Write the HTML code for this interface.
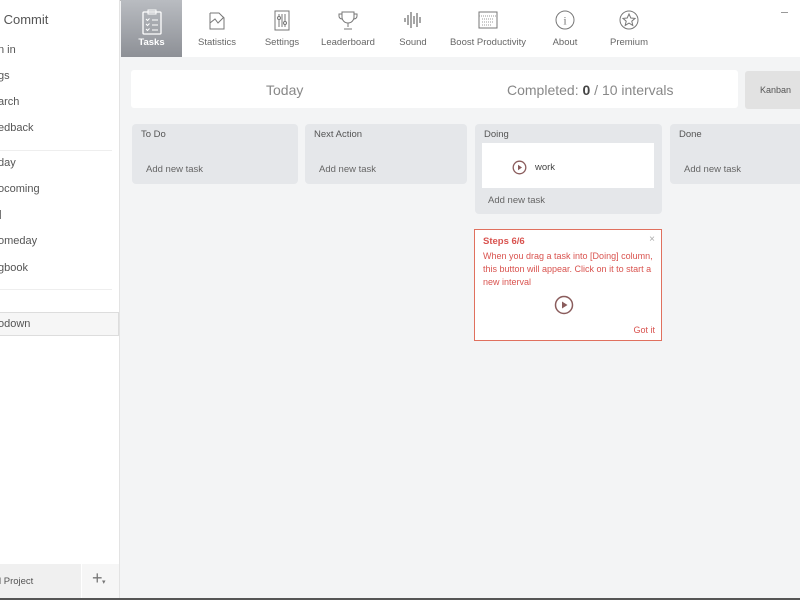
<!DOCTYPE html>
<html><head><meta charset="utf-8"><style>
*{margin:0;padding:0;box-sizing:border-box}
body{width:800px;height:600px;overflow:hidden;background:#f3f4f5;font-family:"Liberation Sans",sans-serif;position:relative;color:#555}
.a{position:absolute}
#side{left:0;top:0;width:120px;height:600px;background:#fff;border-right:1px solid #e3e3e3}
.si{position:absolute;left:-2px;font-size:11px;color:#555}
.nav{left:121px;top:0;width:679px;height:57px;background:#fff}
.tab{position:absolute;top:0;height:57px;text-align:center;font-size:9.5px;color:#666}
.tab span{position:absolute;left:0;right:0;top:37px}
.tab svg{position:absolute;top:9px;left:50%;margin-left:-11px}
.col{position:absolute;background:#e5e7ea;border-radius:4px;font-size:9.5px;color:#555}
.col .t{position:absolute;left:9px;top:5px}
.col .n{position:absolute;left:14px;top:40px;color:#666}
</style></head><body>
<div class="a" style="left:0;top:0;width:800px;height:1px;background:#bbb"></div>
<div id="side" class="a">
<div class="si" style="top:12px;font-size:13px;left:0">&nbsp;Commit</div>
<div class="si" style="top:44px">n in</div>
<div class="si" style="top:70px">gs</div>
<div class="si" style="top:96px">arch</div>
<div class="si" style="top:122px">edback</div>
<div class="a" style="left:0;top:150px;width:112px;height:1px;background:#eee"></div>
<div class="si" style="top:157px">day</div>
<div class="si" style="top:183px">ocoming</div>
<div class="a" style="left:0;top:210px;width:1px;height:9px;background:#777"></div>
<div class="si" style="top:235px">omeday</div>
<div class="si" style="top:262px">gbook</div>
<div class="a" style="left:0;top:289px;width:112px;height:1px;background:#eee"></div>
<div class="a" style="left:0;top:312px;width:119px;height:24px;background:#f6f6f6;border:1px solid #ddd;border-left:none"></div>
<div class="si" style="top:318px">odown</div>
<div class="a" style="left:0;top:564px;width:81px;height:34px;background:#f0f0f0"></div>
<div class="a" style="left:82px;top:564px;width:37px;height:34px;background:#f6f6f6"></div>
<div class="si" style="top:576px;font-size:9.5px;left:-1px">l Project</div>
<div class="a" style="left:92px;top:568px;font-size:18px;color:#777;font-weight:200">+</div>
<div class="a" style="left:102px;top:578px;font-size:7px;color:#777">▾</div>
</div>
<div class="a" style="left:0;top:598px;width:800px;height:2px;background:#555"></div>
<div class="a nav">
<div class="tab" style="left:0;width:61px;background:linear-gradient(#b9bcc1,#8d9096);color:#fff;font-weight:bold"><svg width="22" height="26" viewBox="0 0 22 26"><rect x="2" y="3" width="18" height="22" rx="1" fill="none" stroke="#fff" stroke-width="1.3"/><rect x="7" y="1" width="8" height="4" fill="none" stroke="#fff"/><path d="M5 10l1.5 1.5 2-2M11 11h6M5 15l1.5 1.5 2-2M11 16h6M5 20l1.5 1.5 2-2M11 21h6" stroke="#fff" fill="none"/></svg><span>Tasks</span></div>
<div class="tab" style="left:70px;width:52px"><svg width="22" height="22" viewBox="0 0 22 22"><path d="M4 4v16h14V9l-5-5H4M4 14l5-4 3 4 6-6" fill="none" stroke="#777"/></svg><span>Statistics</span></div>
<div class="tab" style="left:135px;width:52px"><svg width="22" height="22" viewBox="0 0 22 22"><rect x="4" y="2" width="14" height="19" fill="none" stroke="#777"/><path d="M8 5v13M11 5v13M14 5v13" stroke="#777"/><circle cx="8" cy="9" r="1.5" fill="#fff" stroke="#777"/><circle cx="14" cy="14" r="1.5" fill="#fff" stroke="#777"/></svg><span>Settings</span></div>
<div class="tab" style="left:196px;width:62px"><svg width="22" height="22" viewBox="0 0 22 22"><path d="M5 3h12v5a6 6 0 0 1-12 0zM5 5H2v2a3 3 0 0 0 3 3M17 5h3v2a3 3 0 0 1-3 3M11 14v4M7 20h8" fill="none" stroke="#777"/></svg><span>Leaderboard</span></div>
<div class="tab" style="left:268px;width:48px"><svg width="22" height="22" viewBox="0 0 22 22"><path d="M3 9v4M6 6v10M9 3v16M12 7v8M15 4v14M18 8v6" stroke="#777" stroke-width="1.3"/></svg><span>Sound</span></div>
<div class="tab" style="left:326px;width:82px"><svg width="22" height="22" viewBox="0 0 22 22"><rect x="2" y="3" width="18" height="16" fill="none" stroke="#777"/><path d="M2 7h18M5 10h12M5 13h12M5 16h9" stroke="#999" stroke-dasharray="1 1"/></svg><span>Boost Productivity</span></div>
<div class="tab" style="left:420px;width:48px"><svg width="22" height="22" viewBox="0 0 22 22"><circle cx="11" cy="11" r="9" fill="none" stroke="#777"/><text x="11" y="15.5" font-size="12" text-anchor="middle" fill="#777" font-family="Liberation Serif">i</text></svg><span>About</span></div>
<div class="tab" style="left:485px;width:46px"><svg width="22" height="22" viewBox="0 0 22 22"><circle cx="11" cy="11" r="9" fill="none" stroke="#777"/><path d="M11 5l1.8 4 4.2.4-3.2 2.8 1 4.2-3.8-2.3-3.8 2.3 1-4.2-3.2-2.8 4.2-.4z" fill="none" stroke="#777"/></svg><span>Premium</span></div>
<div class="a" style="left:660px;top:12px;width:7px;height:1px;background:#999"></div>
</div>
<div class="a" style="left:131px;top:70px;width:607px;height:38px;background:#fff;border-radius:3px"></div>
<div class="a" style="left:266px;top:82px;font-size:14px;color:#888">Today</div>
<div class="a" style="left:507px;top:82px;font-size:14px;color:#888">Completed: <b style="color:#444">0</b> / 10 intervals</div>
<div class="a" style="left:745px;top:71px;width:60px;height:38px;background:#e2e2e2;border-radius:3px"></div>
<div class="a" style="left:760px;top:85px;font-size:9px;color:#555">Kanban</div>
<div class="col" style="left:132px;top:124px;width:166px;height:60px"><div class="t">To Do</div><div class="n">Add new task</div></div>
<div class="col" style="left:305px;top:124px;width:162px;height:60px"><div class="t">Next Action</div><div class="n">Add new task</div></div>
<div class="col" style="left:475px;top:124px;width:187px;height:90px"><div class="t">Doing</div>
<div class="a" style="left:7px;top:19px;width:172px;height:45px;background:#fff"></div>
<svg class="a" style="left:37px;top:36px" width="15" height="15" viewBox="0 0 15 15"><circle cx="7.5" cy="7.5" r="6.3" fill="none" stroke="#8a5c5c" stroke-width="1.3"/><path d="M6 4.8v5.4l4-2.7z" fill="#8a5c5c"/></svg>
<div class="a" style="left:60px;top:38px;color:#444">work</div>
<div class="a" style="left:13px;top:71px;color:#666">Add new task</div></div>
<div class="col" style="left:670px;top:124px;width:140px;height:60px"><div class="t">Done</div><div class="n">Add new task</div></div>
<div class="a" style="left:474px;top:229px;width:188px;height:112px;background:#fff;border:1px solid #e0705e;color:#d9534f;font-size:9px;line-height:13px">
<div class="a" style="left:8px;top:5px;font-weight:bold;font-size:9.5px">Steps 6/6</div>
<div class="a" style="right:6px;top:3px;color:#aaa;font-size:10px">×</div>
<div class="a" style="left:8px;top:20px;width:180px">When you drag a task into [Doing] column, this button will appear. Click on it to start a new interval</div>
<svg class="a" style="left:79px;top:65px" width="20" height="20" viewBox="0 0 20 20"><circle cx="10" cy="10" r="8.5" fill="none" stroke="#8a5c5c" stroke-width="1.5"/><path d="M8 6.5v7l5.5-3.5z" fill="#8a5c5c"/></svg>
<div class="a" style="right:6px;top:94px">Got it</div>
</div>
</body></html>
